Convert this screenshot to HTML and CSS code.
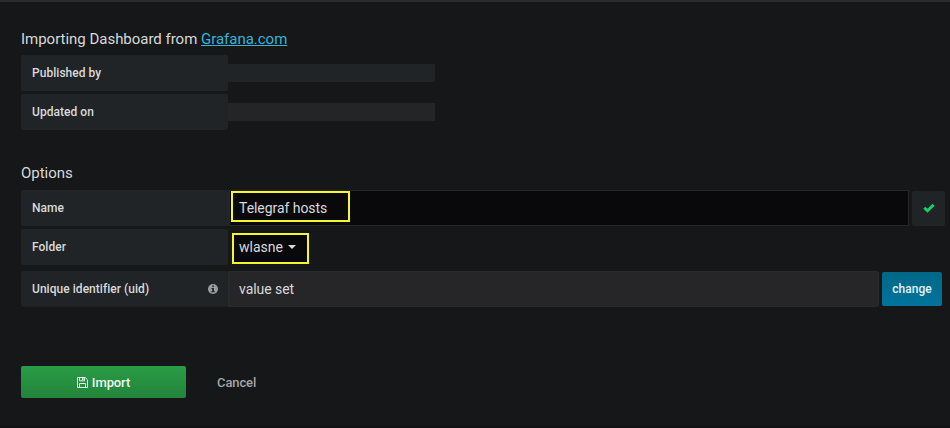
FILE: index.html
```html
<!DOCTYPE html>
<html lang="en">
<head>
<meta charset="utf-8">
<title>Import dashboard</title>
<link rel="stylesheet" href="styles.css">
</head>
<body>
<main class="page">
  <span class="corner"></span>
  <section class="section">
    <h1 class="heading"><span>Importing Dashboard from <a class="link" href="#">Grafana.com</a></span></h1>
    <div class="row"><span class="label">Published by</span><span class="empty empty-cool"></span></div>
    <div class="row"><span class="label">Updated on</span><span class="empty"></span></div>
  </section>
  <section class="section options">
    <h2 class="heading options-heading">Options</h2>
    <div class="row">
      <span class="label">Name</span>
      <div class="field name-field"><span class="mark mark-name">Telegraf hosts</span></div>
      <span class="valid">
        <svg width="12" height="10" viewBox="0 0 12 10"><path d="M1.3 4.7 4.5 7.7 10.6 1.7" fill="none" stroke="#10d465" stroke-width="2.9"/></svg>
      </span>
    </div>
    <div class="row">
      <span class="label">Folder</span>
      <span class="mark mark-folder">wlasne <i class="caret"></i></span>
    </div>
    <div class="row uid-row">
      <span class="label">Unique identifier (uid)
        <svg width="10" height="10" viewBox="0 0 10 10"><circle cx="5" cy="5" r="5" fill="#9b9c9d"/><path d="M4.2 1.5h1.7v1.4H4.2zM3.4 4h2.5v3h.8v1.2H3.4V7h.8V5.1h-.8z" fill="#212426"/></svg>
      </span>
      <div class="field uid-field">value set</div>
      <button class="change">change</button>
    </div>
  </section>
  <div class="actions">
    <button class="import">
      <svg width="11" height="11" viewBox="0 0 11 11"><path d="M.5.5h7.7l2.3 2.3v7.7H.5zM2.5.5v3.3h5V.5M2.5 10.5V6.5h6v4" fill="none" stroke="#e4f3e7"/><path d="M5 1h1.5v2H5z" fill="#e4f3e7"/></svg>
      <span>Import</span>
    </button>
    <button class="cancel">Cancel</button>
  </div>
</main>
</body>
</html>
```
FILE: styles.css
```css
* {
  box-sizing: border-box;
}

body {
  margin: 0;
  background: #161719;
  color: #d8d9da;
  font-family: Roboto, sans-serif;
  font-size: 14px;
}

.page {
  position: relative;
  height: 428px;
  padding: 25px 5px 0 21px;
  border-top: 2px solid #2b2c2e;
  border-bottom: 2px solid #111214;
  overflow: hidden;
}

.corner {
  position: absolute;
  top: -2px;
  left: 0;
  width: 2px;
  height: 2px;
  background: #fff;
}

.heading {
  display: flex;
  align-items: center;
  height: 24px;
  margin: 0 0 4px;
  font-size: 15px;
  font-weight: 400;
  letter-spacing: -0.02px;
}

.options-heading {
  margin-bottom: 5px;
}

.link {
  color: #33b5d9;
  text-decoration: underline;
}

.row {
  display: flex;
  align-items: center;
  height: 36px;
  margin-bottom: 3px;
}

.label {
  display: flex;
  align-items: center;
  justify-content: space-between;
  flex: none;
  width: 207px;
  height: 36px;
  padding: 0 10px 0 11px;
  border-radius: 2px;
  background: #212426;
  font-size: 12px;
  font-weight: 500;
  letter-spacing: 0.04px;
}

.empty {
  width: 207px;
  height: 18px;
  background: #242527;
}

.empty-cool {
  background: #212426;
}

.options {
  margin-top: 31px;
}

.field {
  display: flex;
  align-items: center;
  height: 36px;
  border: 1px solid #262628;
  border-left-width: 2px;
}

.name-field {
  width: 681px;
  background: #09090b;
}

.valid {
  display: flex;
  align-items: center;
  justify-content: center;
  width: 33px;
  height: 35px;
  margin-left: 3px;
  border-radius: 2px;
  background: #212426;
}

.mark {
  display: flex;
  align-items: center;
  height: 31px;
  border: 2px solid #f6f62d;
  background: #09090b;
}

.mark-name {
  width: 119px;
  margin-left: 1px;
  margin-top: -3px;
  padding: 3px 0 0 6px;
  letter-spacing: -0.05px;
}

.mark-folder {
  width: 77px;
  margin: 3px 0 0 4px;
  padding: 0 0 3px 5px;
}

.caret {
  margin-left: 5px;
  border: 4px solid transparent;
  border-top-color: #d8d9da;
  border-bottom: 0;
}

.uid-row {
  margin-top: 6px;
}

.uid-field {
  width: 651px;
  padding-left: 9px;
  border-color: #292a2d;
  border-radius: 0 3px 3px 0;
  background: #262628;
  letter-spacing: -0.05px;
}

button {
  display: flex;
  align-items: center;
  justify-content: center;
  padding: 0;
  border: 0;
  font-family: inherit;
  font-weight: 500;
}

.change {
  width: 60px;
  height: 34px;
  margin-left: 3px;
  border-radius: 2px;
  background: linear-gradient(#006887, #00749c);
  color: #e4f1f5;
  font-size: 12px;
}

.actions {
  display: flex;
  align-items: center;
  margin-top: 59px;
}

.import {
  gap: 4px;
  width: 165px;
  height: 32px;
  border-radius: 2px;
  background: linear-gradient(#299c46, #23843b);
  color: #eef8f0;
  font-size: 13px;
  letter-spacing: -0.1px;
}

.cancel {
  margin-left: 31px;
  background: transparent;
  color: #a4a5a7;
  font-size: 13px;
  letter-spacing: -0.1px;
}
```
